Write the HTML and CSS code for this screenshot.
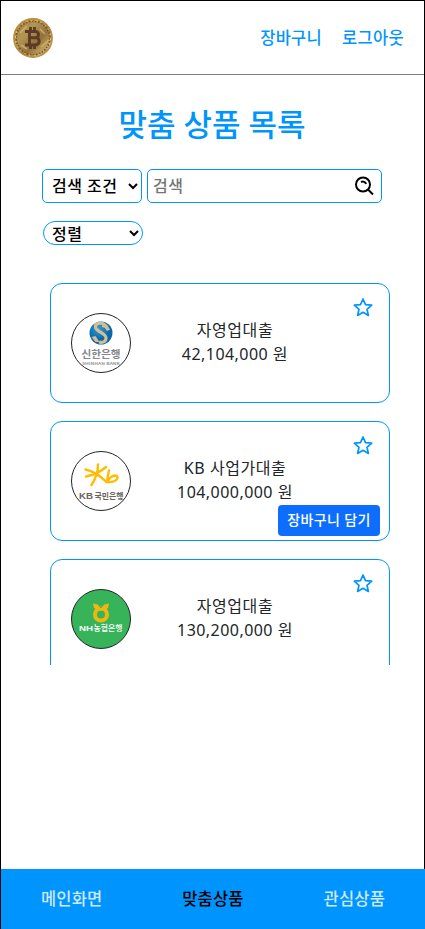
FILE: index.html
```html
<!DOCTYPE html>
<html lang="ko">
<head>
<meta charset="utf-8">
<title>맞춤 상품 목록</title>
<link rel="stylesheet" href="styles.css">
</head>
<body>
<div class="app">
  <header class="header">
    <svg class="coin" viewBox="0 0 40 40">
      <defs><linearGradient id="gold" x1="0" y1="0" x2="1" y2="1"><stop offset="0" stop-color="#a77b31"/><stop offset=".35" stop-color="#b39655"/><stop offset=".6" stop-color="#94703a"/><stop offset=".8" stop-color="#c4a560"/><stop offset="1" stop-color="#8c6427"/></linearGradient></defs>
      <circle cx="20" cy="20" r="19.3" fill="url(#gold)" stroke="#bc8c3a" stroke-width="1.2"/>
      <circle cx="20" cy="20" r="16.8" fill="none" stroke="#73542a" stroke-width="1.8" stroke-dasharray="1.6 1.5"/>
      <circle cx="20" cy="20" r="17.6" fill="none" stroke="#e3ca85" stroke-width="1" stroke-dasharray="2 3"/>
      <path d="M7 15l7-7M8 27l6 4M28 29l8-7M27 11l5 5" stroke="#d4bd80" stroke-width="1.6" opacity=".7"/>
      <path d="M12 13.500h10c4.200 0 4.800 5 1 6.200c4.700 1.200 4.100 7.300-1.200 7.300h-9.800M16.500 13.500v13.500M17 19.700h5M17.500 9v4M21.500 9v4M17.500 27v4M21.500 27v4" fill="none" stroke="#5c3a25" stroke-width="2.900"/>
    </svg>
    <nav class="links"><a>장바구니</a><a>로그아웃</a></nav>
  </header>
  <main class="main">
    <h1 class="title">맞춤 상품 목록</h1>
    <div class="search">
      <select class="condition"><option>검색 조건</option></select>
      <label class="field"><input type="text" placeholder="검색">
        <svg class="lens" viewBox="0 0 20 20"><circle cx="9" cy="8.500" r="7" /><path d="M14 13.500l5 5M7 6c2.200-1 4.500 0 5 2"/></svg>
      </label>
    </div>
    <select class="sort"><option>정렬</option></select>
    <section class="list">
      <article class="card">
        <svg class="bank" viewBox="0 0 60 60">
          <defs><radialGradient id="globe" cx=".4" cy=".3"><stop offset="0" stop-color="#2d9bd6"/><stop offset="1" stop-color="#0868ab"/></radialGradient></defs>
          <circle cx="30" cy="30" r="29.500" fill="#fff" stroke="#212529"/>
          <circle cx="30" cy="20" r="11.500" fill="url(#globe)"/>
          <path d="M34 12c-4-3-10-2-9.500 2c.5 5 10.500 6 10.500 11c0 4-4 5-7 4" fill="none" stroke="#d8bd91" stroke-width="3.200"/>
          <path d="M31 10l5 1.500l3 5l-3 1.500l-2-3l-3-1zM20.500 24l4-1l4 6l-4 0z" fill="#d8bd91"/>
          <text class="shinhan" x="30" y="44.500" textLength="39" lengthAdjust="spacingAndGlyphs">신한은행</text>
          <text class="shinhan-en" x="30" y="51.500" textLength="38" lengthAdjust="spacingAndGlyphs">SHINHAN BANK</text>
        </svg>
        <div class="info"><p>자영업대출</p><p><span class="num">42,104,000</span> 원</p></div>
        <svg class="star" viewBox="0 0 20 20"><path d="M10 1.500l2.500 5.600 6.200.6-4.700 4.100 1.400 6.100L10 14.800l-5.400 3.100L6 11.800 1.300 7.700l6.200-.6z"/></svg>
      </article>
      <article class="card">
        <svg class="bank" viewBox="0 0 60 60">
          <circle cx="30" cy="30" r="29.500" fill="#fff" stroke="#212529"/>
          <path d="M27 13.500c0 6-1.500 13-6.500 20.500M14.500 18.500c7 1.500 14 5.500 21 12.500M35 16c-5 4.500-12 8-20 9.500M38 19.500c-1 4-1.500 7-2 11.500c11 1 13-6.500 8-6.500c-3 0-6 3-7 5.500" fill="none" stroke="#ffbc00" stroke-width="2.400" stroke-linecap="round" stroke-linejoin="round"/>
          <text class="kb kb-en" x="15" y="48" textLength="14" lengthAdjust="spacingAndGlyphs">KB</text>
          <text class="kb" x="38" y="48" textLength="29" lengthAdjust="spacingAndGlyphs">국민은행</text>
        </svg>
        <div class="info"><p>KB 사업가대출</p><p><span class="num">104,000,000</span> 원</p></div>
        <svg class="star" viewBox="0 0 20 20"><path d="M10 1.500l2.500 5.600 6.200.6-4.700 4.100 1.400 6.100L10 14.800l-5.400 3.100L6 11.800 1.300 7.700l6.200-.6z"/></svg>
        <button class="add">장바구니 담기</button>
      </article>
      <article class="card">
        <svg class="bank" viewBox="0 0 60 60">
          <circle cx="30" cy="30" r="29.500" fill="#37b35a" stroke="#212529"/>
          <circle cx="30" cy="25.500" r="6" fill="none" stroke="#efb810" stroke-width="4"/>
          <path d="M22 14.500l5 1 3 2.500 3-2.500 5-1-1 4.500-4 2.500h-6l-4-2.500z" fill="#efb810"/>
          <path d="M27 15l3 4 3-4" fill="none" stroke="#37b35a" stroke-width="1"/>
          <text class="nh nh-en" x="15" y="42.300" textLength="14" lengthAdjust="spacingAndGlyphs">NH</text>
          <text class="nh" x="37" y="42.300" textLength="29" lengthAdjust="spacingAndGlyphs">농협은행</text>
        </svg>
        <div class="info"><p>자영업대출</p><p><span class="num">130,200,000</span> 원</p></div>
        <svg class="star" viewBox="0 0 20 20"><path d="M10 1.500l2.500 5.600 6.200.6-4.700 4.100 1.400 6.100L10 14.800l-5.400 3.100L6 11.800 1.300 7.700l6.200-.6z"/></svg>
      </article>
    </section>
  </main>
  <nav class="tabs"><a>메인화면</a><a class="active">맞춤상품</a><a>관심상품</a></nav>
</div>
</body>
</html>
```
FILE: styles.css
```css
* { box-sizing: border-box; }
body { margin: 0; font: 16px/24px "Noto Sans", "Noto Sans CJK KR", sans-serif; color: #212529; background: #fff; }
.app { height: 929px; display: flex; flex-direction: column; border: 1px solid #000; border-bottom: 0; }
.header { height: 74px; flex: none; border-bottom: 1px solid #808080; display: flex; justify-content: space-between; align-items: center; padding: 0 20px 0 12px; }
.coin { width: 40px; height: 40px; }
.links { display: flex; gap: 20px; color: #0094ff; font-size: 16.5px; font-weight: 500; letter-spacing: .3px; }
.main { flex: 1; min-height: 0; display: flex; flex-direction: column; align-items: flex-start; padding-left: 41px; }
.title { margin: 30px 0 0; width: 340px; height: 38px; line-height: 38px; text-align: center; font-size: 31px; font-weight: 500; color: #0094ff; }
.search { display: flex; gap: 5px; margin-top: 26px; }
select, input { font: inherit; font-weight: 500; background: #fff; color: #000; letter-spacing: .5px; margin: 0; }
.condition { width: 100px; height: 34px; border: 1px solid #0094ff; border-radius: 5px; padding: 0 0 0 5px; }
.field { width: 235px; height: 34px; border: 1px solid #0094ff; border-radius: 5px; display: flex; align-items: center; padding: 0 7px 0 5px; }
.field input { flex: 1; min-width: 0; border: 0; padding: 0; outline: 0; }
.lens { width: 20px; height: 20px; fill: none; stroke: #000; stroke-width: 2; }
.sort { width: 100px; height: 24px; margin: 18px 0 0 1px; border: 1px solid #0094ff; border-radius: 12px; padding: 0 0 2px 4px; }
.list { margin: 38px 0 0 8px; height: 382px; width: 340px; overflow: hidden; }
.card { position: relative; height: 120px; margin-bottom: 18px; border: 1px solid #0094ff; border-radius: 12px; padding: 0 20px; display: flex; align-items: center; }
.bank { width: 60px; height: 60px; flex: none; }
.info { width: 208px; padding-bottom: 2px; text-align: center; letter-spacing: .55px; }
.info p { margin: 0; }
.num { letter-spacing: .45px; }
.star { position: absolute; right: 16px; top: 13px; width: 20px; height: 21px; fill: none; stroke: #0094ff; stroke-width: 1.700; stroke-linejoin: round; }
.add { position: absolute; right: 9px; bottom: 4px; width: 102px; height: 31px; padding: 0 0 2px; border: 0; border-radius: 4px; background: #0d6efd; color: #fff; font: 500 14px/21px "Noto Sans CJK KR", sans-serif; letter-spacing: .3px; }
.tabs { height: 60px; flex: none; background: #0094ff; display: grid; grid-template-columns: repeat(3, 1fr); align-items: center; text-align: center; margin-right: -1px; color: #cce9ff; font-size: 16.5px; font-weight: 500; letter-spacing: .2px; }
.active { color: #000; }
.shinhan, .shinhan-en, .kb, .nh { text-anchor: middle; letter-spacing: 0; font-family: "Noto Sans CJK KR", sans-serif; }
.shinhan { font-size: 10.5px; font-weight: 700; fill: #85878b; }
.shinhan-en { font-size: 4px; font-weight: 700; fill: #999; }
.kb { font-size: 8.5px; font-weight: 700; fill: #6c645b; }
.nh { font-size: 8px; font-weight: 500; fill: #fff; }
.kb-en, .nh-en { font-family: "Liberation Sans", sans-serif; }
.nh-en { font-weight: 700; }
```
